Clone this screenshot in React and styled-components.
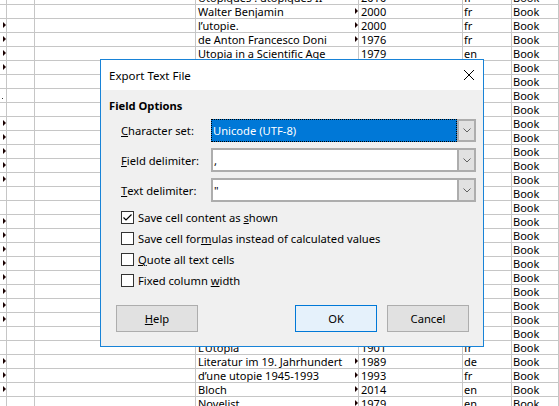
import styled, { createGlobalStyle } from 'styled-components'

/** global */
const Global = createGlobalStyle`
  html, body {
    margin: 0;
    padding: 0;
    background: #fff;
    overflow: hidden;
  }
  body {
    font-family: 'Noto Sans', 'Open Sans', sans-serif;
  }
`

/** sheet */
const Page = styled.div`
  position: relative;
  width: 559px;
  height: 406px;
  overflow: hidden;
  background: #fff;
`

const Sheet = styled.div`
  display: grid;
  grid-template-columns: 7px 28px 161px 163px 104px 49px 1fr;
  grid-auto-rows: 14px;
  margin-top: -9px;
`

const Cell = styled.div`
  position: relative;
  box-sizing: border-box;
  border-right: 1px solid #c6c6c6;
  border-bottom: 1px solid #c6c6c6;
  padding-left: ${(p) => (p.$pad ? p.$pad : 2)}px;
  font-size: 11px;
  line-height: 13px;
  color: #000;
  white-space: nowrap;
  overflow: hidden;

  &::after {
    content: '';
    display: ${(p) => (p.$more ? 'block' : 'none')};
    position: absolute;
    right: 0;
    top: 3px;
    border-top: 3px solid transparent;
    border-bottom: 3px solid transparent;
    border-left: 3px solid #1a0000;
  }

  &::before {
    content: '';
    display: ${(p) => (p.$dot ? 'block' : 'none')};
    position: absolute;
    left: 2px;
    bottom: 3px;
    width: 1px;
    height: 1px;
    background: #333;
  }
`

/** dialog */
const Dialog = styled.div`
  position: absolute;
  left: 100px;
  top: 59px;
  width: 384px;
  height: 288px;
  box-sizing: border-box;
  border: 1px solid #1883d7;
  background: #f0f0f0;
  display: flex;
  flex-direction: column;
  font-size: 11.2px;
  color: #000;
`

const TitleBar = styled.div`
  height: 30px;
  flex: none;
  background: #fff;
  display: flex;
  align-items: center;
  justify-content: space-between;
  padding: 0 9px 0 8px;
`

const Title = styled.span`
  font-size: 11.5px;
`

const Body = styled.div`
  padding: 8px 0 0 8px;
  display: flex;
  flex-direction: column;
`

const Section = styled.div`
  font-weight: 700;
  line-height: 16px;
`

const Form = styled.div`
  display: grid;
  grid-template-columns: 90px 265px;
  grid-template-rows: 23px 24px 24px;
  row-gap: 6px;
  margin: 5px 0 0 12px;
`

const Label = styled.div`
  display: flex;
  align-items: center;
`

const Key = styled.span`
  text-decoration: underline;
  text-underline-offset: 1px;
`

const Combo = styled.div`
  display: flex;
`

const Field = styled.div`
  flex: 1;
  box-sizing: border-box;
  display: flex;
  align-items: center;
  background: ${(p) => (p.$focused ? '#0078d7' : '#fff')};
  color: ${(p) => (p.$focused ? '#fff' : '#000')};
  border: ${(p) => (p.$focused ? '1px dotted #000' : '2px solid #adadad')};
  border-right: ${(p) => (p.$focused ? '1px dotted #000' : 'none')};
  padding-left: 1px;
`

const DropButton = styled.div`
  width: 19px;
  flex: none;
  box-sizing: border-box;
  background: #e1e1e1;
  border: 2px solid #adadad;
  display: flex;
  align-items: center;
  justify-content: center;
`

const Checks = styled.div`
  display: flex;
  flex-direction: column;
  margin: 5px 0 0 12px;
`

const CheckRow = styled.div`
  height: 21px;
  display: flex;
  align-items: center;
  gap: 4px;
`

const Box = styled.div`
  width: 13px;
  height: 13px;
  box-sizing: border-box;
  border: 1px solid #333;
  background: #fff;
  display: flex;
`

const Buttons = styled.div`
  display: flex;
  gap: 10px;
  margin: 14px 14px 0 7px;
`

const Button = styled.div`
  width: 82px;
  height: 27px;
  box-sizing: border-box;
  display: flex;
  align-items: center;
  justify-content: center;
  background: ${(p) => (p.$primary ? '#e5f1fb' : '#e1e1e1')};
  border: 1px solid ${(p) => (p.$primary ? '#0078d7' : '#adadad')};
  margin-left: ${(p) => (p.$push ? 'auto' : '0')};
`

/** data */
const titles = {
  0: ['Utopiques : utopiques II', '2010', 'fr'],
  1: ['Walter Benjamin', '2000', 'fr'],
  2: ['l’utopie.', '2000', 'fr'],
  3: ['de Anton Francesco Doni', '1976', 'fr'],
  4: ['Utopia in a Scientific Age', '1979', 'en'],
  25: ['L’Utopia', '1901', 'fr'],
  26: ['Literatur im 19. Jahrhundert', '1989', 'de'],
  27: ['d’une utopie 1945-1993', '1993', 'fr'],
  28: ['Bloch', '2014', 'en'],
  29: ['Novelist', '1979', 'en'],
}

const leadRows = [2, 3, 4, 5, 9, 10, 11, 12, 13, 16, 17, 18, 19, 20, 21, 22, 23, 26, 27, 28]
const moreRows = [1, 2, 3, 26, 27, 28, 29]

const rows = Array.from({ length: 30 }, (_, i) => {
  const [title, year, lang] = titles[i] || ['', '', '']
  return { title, year, lang, lead: leadRows.includes(i), more: moreRows.includes(i), dot: i === 7 }
})

const Chevron = () => (
  <svg width="8" height="5" viewBox="0 0 8 5">
    <polyline points="0.5,0.5 4,4 7.5,0.5" fill="none" stroke="#606060" strokeWidth="1" />
  </svg>
)

const Check = () => (
  <svg width="11" height="11" viewBox="0 0 11 11">
    <polyline points="1.5,5.5 4,8 9.5,2.5" fill="none" stroke="#000" strokeWidth="1.2" />
  </svg>
)

const CloseIcon = () => (
  <svg width="10" height="10" viewBox="0 0 10 10">
    <path d="M0 0 L10 10 M10 0 L0 10" stroke="#000" strokeWidth="1" />
  </svg>
)

const options = [
  { label: <>Save cell content as <Key>s</Key>hown</>, checked: true },
  { label: <>Save cell for<Key>m</Key>ulas instead of calculated values</> },
  { label: <><Key>Q</Key>uote all text cells</> },
  { label: <>Fixed column <Key>w</Key>idth</> },
]

export default function App() {
  return (
    <Page>
      <Global />
      <Sheet>
        {rows.map((r, i) => [
          <Cell key={`a${i}`} $more={r.lead} $dot={r.dot} $pad={0} />,
          <Cell key={`b${i}`} />,
          <Cell key={`c${i}`} />,
          <Cell key={`d${i}`} $more={r.more}>{r.title}</Cell>,
          <Cell key={`e${i}`}>{r.year}</Cell>,
          <Cell key={`f${i}`} $pad={1}>{r.lang}</Cell>,
          <Cell key={`g${i}`} $pad={1}>Book</Cell>,
        ])}
      </Sheet>

      <Dialog>
        <TitleBar>
          <Title>Export Text File</Title>
          <CloseIcon />
        </TitleBar>
        <Body>
          <Section>Field Options</Section>
          <Form>
            <Label><Key>C</Key>haracter set:</Label>
            <Combo>
              <Field $focused>Unicode (UTF-8)</Field>
              <DropButton><Chevron /></DropButton>
            </Combo>
            <Label><Key>F</Key>ield delimiter:</Label>
            <Combo>
              <Field>,</Field>
              <DropButton><Chevron /></DropButton>
            </Combo>
            <Label><Key>T</Key>ext delimiter:</Label>
            <Combo>
              <Field>"</Field>
              <DropButton><Chevron /></DropButton>
            </Combo>
          </Form>
          <Checks>
            {options.map((o, i) => (
              <CheckRow key={i}>
                <Box>{o.checked && <Check />}</Box>
                <span>{o.label}</span>
              </CheckRow>
            ))}
          </Checks>
          <Buttons>
            <Button><span><Key>H</Key>elp</span></Button>
            <Button $primary $push>OK</Button>
            <Button>Cancel</Button>
          </Buttons>
        </Body>
      </Dialog>
    </Page>
  )
}
